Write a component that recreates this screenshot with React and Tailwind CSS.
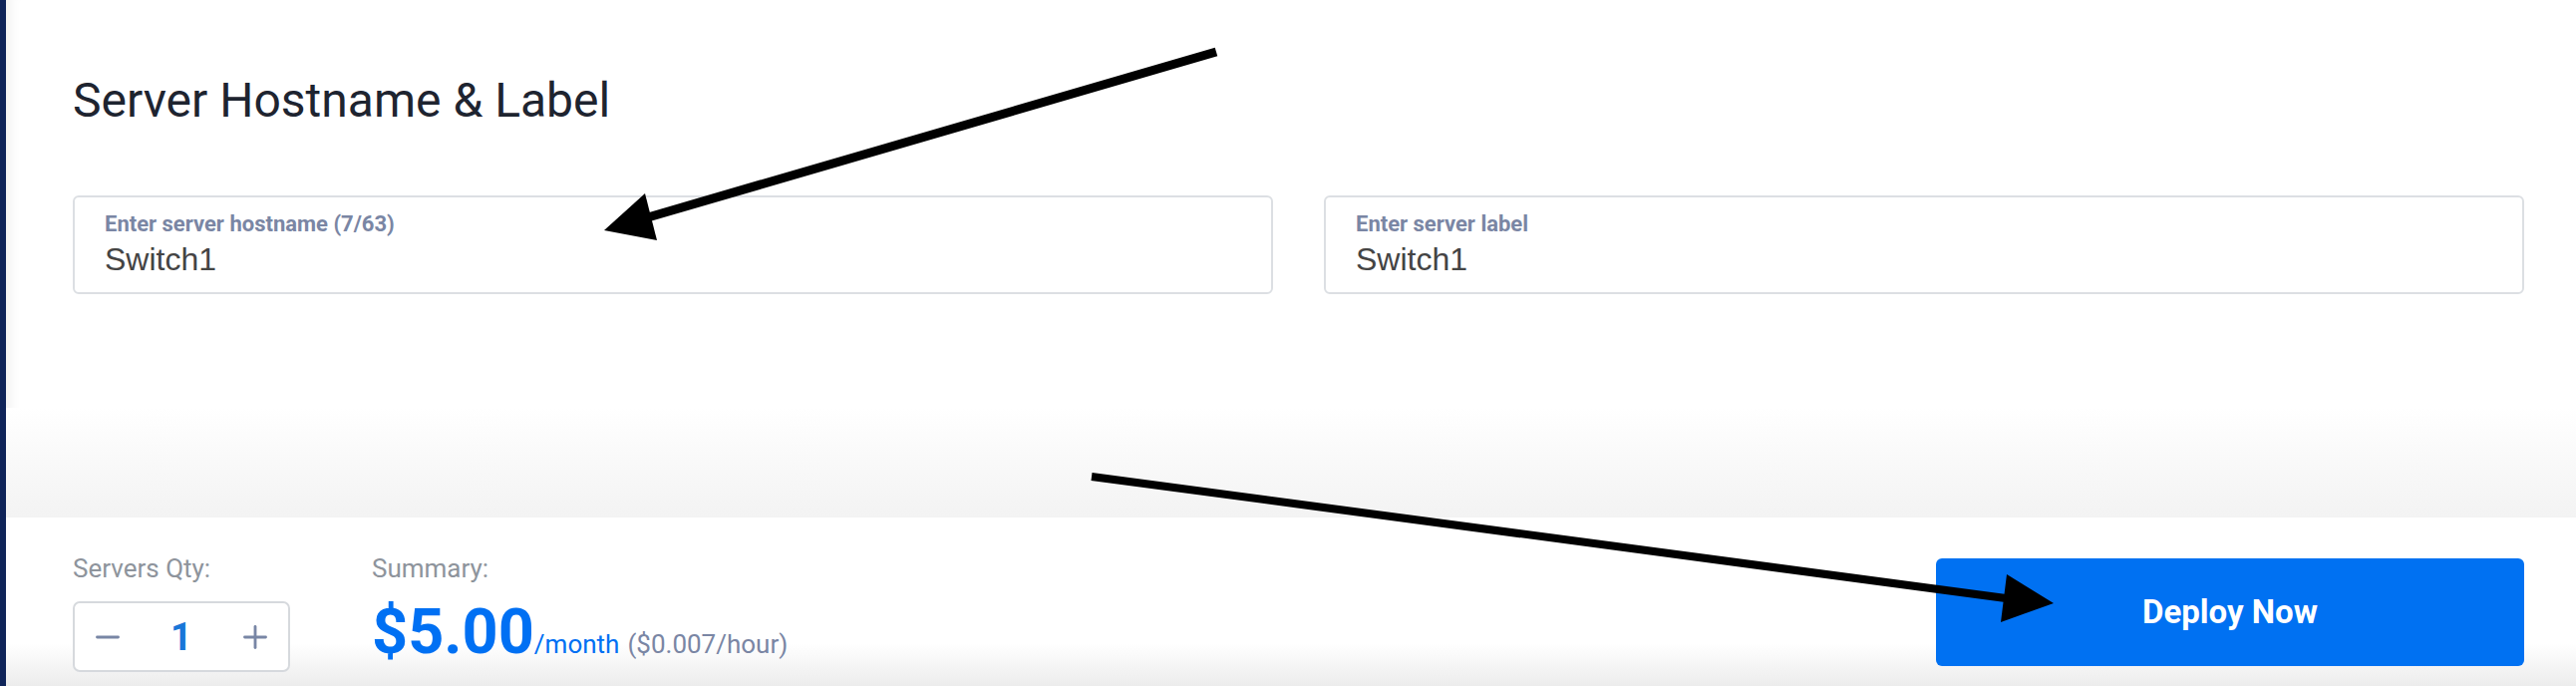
import { Minus, Plus } from "lucide-react";

export default function App() {
  return (
    <div className="relative flex h-[688px] w-[2584px] overflow-hidden bg-white font-['Roboto',sans-serif]">
      <div className="w-[6px] shrink-0 bg-[#0f2459]" />

      <div className="flex flex-1 flex-col shadow-[inset_14px_0_14px_-12px_rgba(0,0,0,0.08)]">
        <section className="flex h-[519px] flex-col">
          <div className="pl-[67px] pr-[52px] pt-[73px]">
            <h1 className="text-[48px] font-normal leading-[56px] text-[#1e2430]">
              Server Hostname &amp; Label
            </h1>

            <div className="mt-[67px] grid grid-cols-2 gap-[51px]">
              <Field label="Enter server hostname (7/63)" value="Switch1" />
              <Field label="Enter server label" value="Switch1" />
            </div>
          </div>
          <div className="mt-auto h-[110px] bg-linear-to-b from-white to-[#f3f3f3]" />
        </section>

        <footer className="flex flex-1 items-start bg-linear-to-b from-white from-75% to-[#ececec] pl-[67px] pr-[52px] pt-[36px]">
          <div>
            <div className="text-[26px] leading-[30px] text-[#8e949c]">Servers Qty:</div>
            <div className="mt-[18px] flex h-[71px] w-[218px] items-center justify-between rounded-[7px] border-2 border-[#d6d9dd] bg-white px-[15px]">
              <Minus size={36} strokeWidth={1.9} className="text-[#7886a5]" />
              <span className="text-[38px] font-bold leading-none text-[#1976d8]">1</span>
              <Plus size={36} strokeWidth={1.9} className="text-[#7886a5]" />
            </div>
          </div>

          <div className="ml-[82px]">
            <div className="text-[26px] leading-[30px] text-[#8e949c]">Summary:</div>
            <div className="mt-[19px] flex items-baseline">
              <span className="text-[63px] font-bold leading-[60px] text-[#0070f3]">$5.00</span>
              <span className="text-[26px] text-[#0070f3]">/month</span>
              <span className="ml-[8px] text-[26px] text-[#7a86a4]">($0.007/hour)</span>
            </div>
          </div>

          <button className="ml-auto mt-[5px] h-[108px] w-[590px] rounded-[6px] bg-[#0071f2] text-[33px] font-bold text-white">
            Deploy Now
          </button>
        </footer>
      </div>

      <svg
        className="pointer-events-none absolute inset-0"
        width="2584"
        height="688"
        viewBox="0 0 2584 688"
      >
        <line x1="1220" y1="52" x2="650" y2="218" stroke="#000" strokeWidth="9" />
        <polygon points="606,231 647,194 659,241" fill="#000" />
        <line x1="1095" y1="478" x2="2012" y2="600" stroke="#000" strokeWidth="8" />
        <polygon points="2060,605 2013,576 2007,624" fill="#000" />
      </svg>
    </div>
  );
}

function Field({ label, value }) {
  return (
    <div className="rounded-[6px] border-2 border-[#dcdfe3] bg-white px-[30px] pb-[16px] pt-[14px]">
      <div className="text-[22px] font-bold leading-[25px] text-[#7a86a4]">{label}</div>
      <div className="mt-[6px] font-['Liberation_Sans',Arial,sans-serif] text-[32px] leading-[34px] text-[#444]">
        {value}
      </div>
    </div>
  );
}
